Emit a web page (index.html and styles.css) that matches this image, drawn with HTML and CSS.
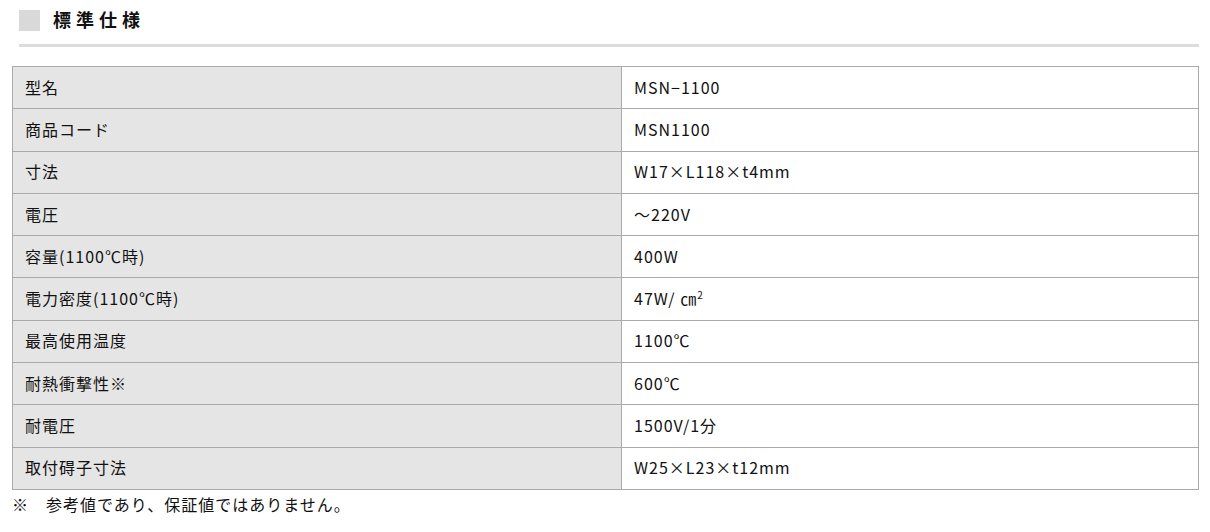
FILE: index.html
```html
<!DOCTYPE html>
<html lang="ja">
<head>
<meta charset="utf-8">
<link rel="stylesheet" href="styles.css">
</head>
<body>
<div class="page">
  <h2 class="heading"><span class="mark"></span><span class="title">標準仕様</span></h2>
  <table class="spec">
    <tr><th>型名</th><td>MSN−1100</td></tr>
    <tr><th>商品コード</th><td>MSN1100</td></tr>
    <tr><th>寸法</th><td>W17×L118×t4mm</td></tr>
    <tr><th>電圧</th><td>～220V</td></tr>
    <tr><th>容量(1100℃時)</th><td>400W</td></tr>
    <tr><th>電力密度(1100℃時)</th><td>47W/ ㎝<sup class="sup">2</sup></td></tr>
    <tr><th>最高使用温度</th><td>1100℃</td></tr>
    <tr><th>耐熱衝撃性※</th><td>600℃</td></tr>
    <tr><th>耐電圧</th><td>1500V/1分</td></tr>
    <tr><th>取付碍子寸法</th><td>W25×L23×t12mm</td></tr>
  </table>
  <p class="note">※　参考値であり、保証値ではありません。</p>
</div>
</body>
</html>
```
FILE: styles.css
```css
html, body {
  margin: 0;
  padding: 0;
  background: #fff;
}
body {
  font-family: "Noto Sans CJK JP", "Liberation Sans", sans-serif;
  color: #111;
}
.page {
  padding: 9px 11px 0 12px;
}
.heading {
  display: flex;
  align-items: center;
  gap: 13px;
  margin: 0 0 19px 7px;
  padding-bottom: 13px;
  border-bottom: 3px solid #dcdcdc;
  font-size: 18px;
  font-weight: bold;
  line-height: 20px;
  letter-spacing: 5px;
}
.title {
  padding-bottom: 2px;
}
.mark {
  display: block;
  width: 21px;
  height: 21px;
  background: #d9d9d9;
}
.spec {
  width: 100%;
  border-collapse: collapse;
  font-size: 16px;
  letter-spacing: 1px;
}
.spec th, .spec td {
  border: 1px solid #aaaaaa;
  height: 39.3px;
  padding: 0 0 2px 12px;
  text-align: left;
  font-weight: normal;
  vertical-align: middle;
  line-height: 20px;
}
.spec th {
  width: 596px;
  background: #e5e5e5;
}
.spec td {
  background: #fff;
}
.sup {
  font-size: 10px;
  line-height: 0;
  vertical-align: 6px;
}
.note {
  margin: 2px 0 0 0;
  font-size: 16px;
  letter-spacing: 1px;
  line-height: 24px;
}
```
